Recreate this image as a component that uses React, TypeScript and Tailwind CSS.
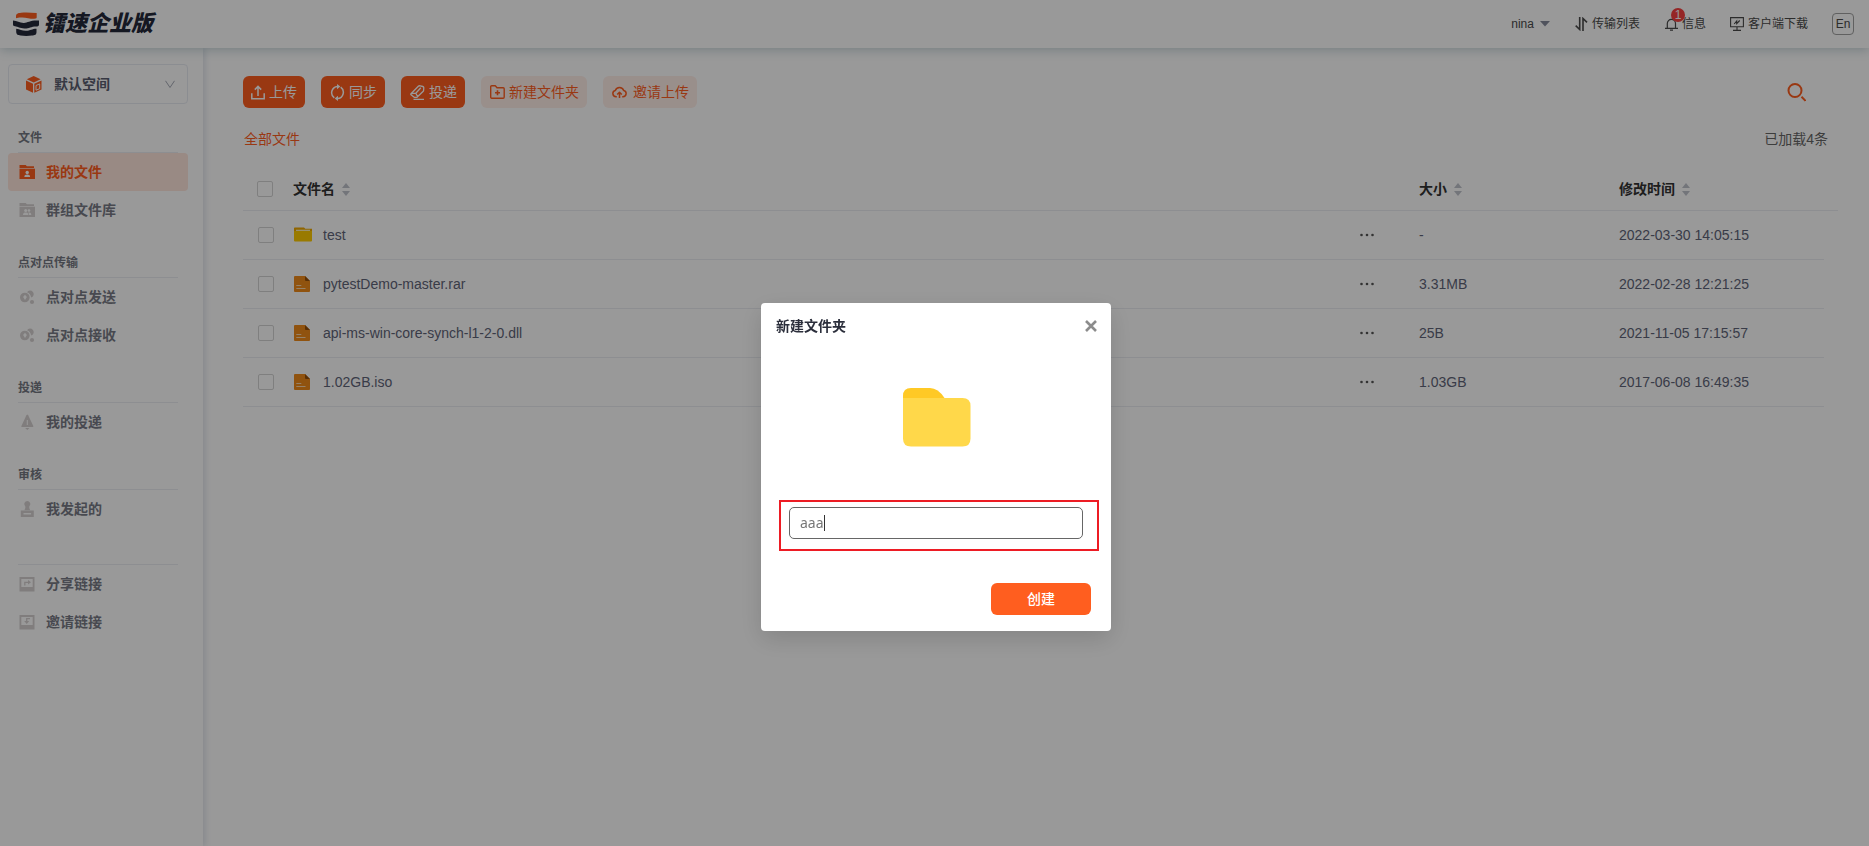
import React, { useState } from 'react';

interface IconProps {
  className?: string;
}

interface FileItem {
  name: string;
  size: string;
  time: string;
  folder?: boolean;
}

interface MenuItem {
  label: string;
  icon: React.FC<IconProps>;
  active?: boolean;
}

interface MenuGroup {
  title?: string;
  items: MenuItem[];
}

const LogoMark = () => (
  <svg width="26" height="24" viewBox="0 0 26 24">
    <path d="M3 6.300V4.500C3 1.500 5 1 8 .7c5-.6 10-.2 15.700 .3v4.600c0 .8-1 1.200-2.400 1.200-4.300.2-8.300-1.600-13.300-1.300-2 .1-4 .2-5 .8z" fill="#ff5e1f" />
    <path d="M0 8.500c4.500 0 6.500 2.600 11 2.400 4-.2 6-2.900 15-2.400v4c0 1.500-1 2-3 2-5 .1-7 2.100-11.500 2C6.500 16.400 5 14.500 2 14.300c-1.500-.1-2-.8-2-2z" fill="#24283a" />
    <path d="M3.200 16.800c4 .7 5.800 2.100 9.800 2 4.500-.1 6-1.900 10.500-2v3.200c0 3-1.800 3.300-4.500 3.600-3.500.4-8 .4-11.500 0-2.700-.3-4.300-1-4.300-4z" fill="#24283a" />
  </svg>
);

const FolderUserIcon: React.FC<IconProps> = ({ className }) => (
  <svg className={className} width="16" height="15" viewBox="0 0 16 15">
    <path d="M.5 0h6.200l1.200 1.300H15V3H.5z" fill="currentColor" />
    <path d="M.5 3.700H16V14H.500z" fill="currentColor" />
    <circle cx="8.200" cy="7.500" r="1.700" fill="#fff" />
    <path d="M5.300 12c0-2 1.300-2.600 2.900-2.600s2.900.6 2.900 2.600z" fill="#fff" />
  </svg>
);

const FolderGroupIcon: React.FC<IconProps> = ({ className }) => (
  <svg className={className} width="16" height="15" viewBox="0 0 16 15">
    <path d="M.5 0h6.200l1.200 1.300H15V3H.5z" fill="currentColor" />
    <path d="M.5 3.700H16V14H.500z" fill="currentColor" />
    <circle cx="6.700" cy="7.500" r="1.500" fill="#fff" />
    <circle cx="10" cy="7.500" r="1.300" fill="#fff" />
    <path d="M4 12c0-2 1.100-2.500 2.700-2.500S9.300 10 9.300 12zM9.900 12c0-1.200-.2-1.800-.6-2.400 1.900-.4 3 .4 3 2.400z" fill="#fff" />
  </svg>
);

const PeerIcon: React.FC<IconProps> = ({ className }) => (
  <svg className={className} width="16" height="15" viewBox="0 0 16 15">
    <path d="M8 2.300A3.600 3.600 0 1 1 12.200 7.600C11.800 5 10.500 3.200 8 2.300z" fill="currentColor" />
    <circle cx="5.800" cy="7.500" r="4.800" fill="currentColor" />
    <path d="M6 4.800l1.900 2.300-1.900 3-1.900-3z" fill="#fff" />
    <circle cx="13" cy="12" r="2.100" fill="currentColor" />
  </svg>
);

const DeliverIcon: React.FC<IconProps> = ({ className }) => (
  <svg className={className} width="16" height="16" viewBox="0 0 16 16">
    <path d="M8.300.500Q9.500.700 10 3L14.300 12q.4 1-.6 1H2.900q-1 0-.5-1L6.600 3Q7.200.700 8.300.500z" fill="currentColor" />
    <path d="M6.200 14h4.200l-2.100 2z" fill="currentColor" />
    <path d="M8.300 6v5" stroke="#fff" strokeWidth="1" />
  </svg>
);

const StampIcon: React.FC<IconProps> = ({ className }) => (
  <svg className={className} width="16" height="16" viewBox="0 0 16 16">
    <path d="M8.300 0a3 3 0 0 1 2.200 5c-.5.800-.3 2.500.7 4.300H5.400C6.400 7.500 6.600 5.800 6.100 5A3 3 0 0 1 8.300 0z" fill="currentColor" />
    <path d="M1.800 9.500h13V16h-13zM4.500 12v1.500h7.600V12z" fill="currentColor" fillRule="evenodd" />
  </svg>
);

const ShareIcon: React.FC<IconProps> = ({ className }) => (
  <svg className={className} width="16" height="15" viewBox="0 0 16 15">
    <path d="M.5 0H15.500V14.500H.500zM2.300 2v8h11.400V2z" fill="currentColor" fillRule="evenodd" />
    <path d="M5.800 8.500V5.300H10" stroke="currentColor" strokeWidth="1.300" fill="none" />
    <path d="M9 3l3 2.300L9 7.500z" fill="currentColor" />
  </svg>
);

const InviteIcon: React.FC<IconProps> = ({ className }) => (
  <svg className={className} width="16" height="15" viewBox="0 0 16 15">
    <path d="M.5 0H15.500V14.500H.500zM2.300 2v8h11.400V2z" fill="currentColor" fillRule="evenodd" />
    <path d="M11 3.700H7.700V7" stroke="currentColor" strokeWidth="1.300" fill="none" />
    <path d="M5.200 6h5L7.700 9z" fill="currentColor" />
  </svg>
);

const CubeIcon = () => (
  <svg width="16" height="17" viewBox="0 0 16 17">
    <path d="M7.700 0L14.600 3.200 7.700 6.400.8 3.200z" fill="#ff5e1f" />
    <path d="M0 4.500l7 3.200v9L0 13.500zM8.300 7.700l7.200-3.200v9l-7.200 3.200z" fill="#ff5e1f" />
    <path d="M10 9.500l3.700-1.600v4.800L10 14.200z" fill="none" stroke="#fff" strokeWidth="1" />
  </svg>
);

const UploadIcon = () => (
  <svg width="14" height="15" viewBox="0 0 14 15" fill="none" stroke="currentColor" strokeWidth="1.500">
    <path d="M.8 8.200v5.500h12.400V8.200M7 11V1.500M3.800 4.600L7 1.400l3.200 3.200" />
  </svg>
);

const SyncIcon = () => (
  <svg width="15" height="17" viewBox="0 0 15 17" fill="none" stroke="currentColor" strokeWidth="1.500">
    <path d="M4.300 13.800A6.300 6.300 0 0 1 7.500 2.400M10.700 3.200a6.300 6.300 0 0 1-3.200 11.400" />
    <path d="M7 0l3.300 2.600L7 5.200zM8 17l-3.300-2.600L8 11.800z" fill="currentColor" stroke="none" />
  </svg>
);

const SendIcon = () => (
  <svg width="15" height="15" viewBox="0 0 15 15" fill="none" stroke="currentColor" strokeWidth="1.300" strokeLinejoin="round">
    <path d="M1 8.700L8.300 1.300q.7-.7 2-.5l2.500.700q1 .3 1 1.300l-.2 2.400q0 .7-.6 1.300L7 12.300H4.200L1 9.700q-.4-.5 0-1zM1.200 8.700l4.600-.5 1.700 3M5.800 8.200l5-5.500M3.500 14.300H14" />
  </svg>
);

const NewFolderIcon = () => (
  <svg width="15" height="14" viewBox="0 0 15 14" fill="none" stroke="currentColor" strokeWidth="1.400" strokeLinejoin="round">
    <path d="M.7 12V1.700q0-1 1-1h3.600l1.700 2h6.200q1 0 1 1V12q0 1.200-1 1.200H1.700q-1 0-1-1.200z" />
    <path d="M7.500 5.300v5M5 7.800h5" strokeWidth="1.600" />
  </svg>
);

const CloudIcon = () => (
  <svg width="15" height="13" viewBox="0 0 15 13" fill="none" stroke="currentColor" strokeWidth="1.500" strokeLinejoin="round">
    <path d="M4.800 10.800H4A3.200 3.200 0 0 1 3.300 4.500 4.400 4.400 0 0 1 11.700 4.500 3.200 3.200 0 0 1 11 10.800H10.200" />
    <path d="M7.500 12V6.500M5.200 8.500l2.300-2.300 2.300 2.300" />
  </svg>
);

const TransferIcon = () => (
  <svg width="13" height="14" viewBox="0 0 13 14" fill="none" stroke="currentColor" strokeWidth="1.600">
    <path d="M4.700 0v12.500L.700 8.700M8 14V1.500l4 3.800" />
  </svg>
);

const BellIcon = () => (
  <svg width="13" height="13" viewBox="0 0 13 13" fill="none" stroke="currentColor" strokeWidth="1.200">
    <path d="M0 10.300h13M2.300 10V5.500a4.100 4.100 0 0 1 8.200 0V10M5 12.200h3" />
  </svg>
);

const MonitorIcon = () => (
  <svg width="14" height="14" viewBox="0 0 14 14" fill="none" stroke="currentColor" strokeWidth="1.100">
    <path d="M.6.600h12.800v9.200H.6zM7 9.800v3.500M3 13.400h8M4.200 7l2.500-3v2.700l3-3.200" />
  </svg>
);

const FolderIcon = () => (
  <svg width="18" height="15" viewBox="0 0 18 15">
    <path d="M0 1.200Q0 .5.7.500H10l1.300 1.300H18V6H0z" fill="#f0a800" />
    <path d="M2 2.700h14V6H2z" fill="#fff2b8" />
    <path d="M0 4h18v9.500q0 1-1 1H1q-1 0-1-1z" fill="#ffcc00" />
  </svg>
);

const FileIcon = () => (
  <svg width="16" height="16" viewBox="0 0 16 16">
    <path d="M1 0h10l5 5v10q0 1-1 1H1q-1 0-1-1V1q0-1 1-1z" fill="#f08a1a" />
    <path d="M11 0l5 5h-4q-1 0-1-1z" fill="#96500a" />
    <path d="M2.300 9.500h5M2.300 12.500h9.200" stroke="#fbd9ae" strokeWidth="1.200" />
  </svg>
);

const BigFolder = () => (
  <svg width="68" height="59" viewBox="0 0 68 59">
    <path d="M0 13V8Q0 0 8 0H27q8 0 14.500 10V13z" fill="#ffc925" />
    <path d="M0 10H59.500q8 0 8 8V50.500q0 8-8 8H8q-8 0-8-8z" fill="#ffd84a" />
  </svg>
);

const SortIcon = () => (
  <svg width="8" height="13" viewBox="0 0 8 13" fill="#c0c4cc">
    <path d="M4 0l4 5H0zM4 13L0 8h8z" />
  </svg>
);

const groups: MenuGroup[] = [
  {
    title: '文件',
    items: [
      { label: '我的文件', icon: FolderUserIcon, active: true },
      { label: '群组文件库', icon: FolderGroupIcon },
    ],
  },
  {
    title: '点对点传输',
    items: [
      { label: '点对点发送', icon: PeerIcon },
      { label: '点对点接收', icon: PeerIcon },
    ],
  },
  { title: '投递', items: [{ label: '我的投递', icon: DeliverIcon }] },
  { title: '审核', items: [{ label: '我发起的', icon: StampIcon }] },
  {
    items: [
      { label: '分享链接', icon: ShareIcon },
      { label: '邀请链接', icon: InviteIcon },
    ],
  },
];

const files: FileItem[] = [
  { name: 'test', size: '-', time: '2022-03-30 14:05:15', folder: true },
  { name: 'pytestDemo-master.rar', size: '3.31MB', time: '2022-02-28 12:21:25' },
  { name: 'api-ms-win-core-synch-l1-2-0.dll', size: '25B', time: '2021-11-05 17:15:57' },
  { name: '1.02GB.iso', size: '1.03GB', time: '2017-06-08 16:49:35' },
];

const Header = () => (
  <header className="relative z-10 flex h-12 items-center justify-between bg-white pl-[13px] pr-[15px] shadow-[0_2px_10px_rgba(60,110,125,0.3)]">
    <a href="#" className="flex items-center gap-1 text-[22px] leading-6 font-black italic text-[#24283a]">
      <LogoMark />
      镭速企业版
    </a>
    <nav className="flex items-center text-xs text-[#4a4a4a]">
      <button className="flex items-center gap-1.5">
        nina
        <svg width="10" height="6" viewBox="0 0 10 6" fill="#858b9c">
          <path d="M0 0h10L5 5.500z" />
        </svg>
      </button>
      <button className="ml-[25px] flex items-center gap-1">
        <TransferIcon />
        传输列表
      </button>
      <button className="relative ml-[25px] flex items-center gap-1">
        <BellIcon />
        信息
        <span className="absolute -top-2 left-1.5 h-3.5 w-3.5 rounded-full bg-[#f84040] text-center text-xs leading-3.5 text-white">1</span>
      </button>
      <button className="ml-6 flex items-center gap-1">
        <MonitorIcon />
        客户端下载
      </button>
      <button className="ml-6 h-[22px] w-[22px] rounded-sm border border-[#a0a0a0] text-center">En</button>
    </nav>
  </header>
);

const Sidebar = () => (
  <aside className="w-[203px] shrink-0 px-2 pt-4 pr-[15px] shadow-[2px_0_6px_rgba(90,110,150,0.2)]">
    <button className="flex h-10 w-full items-center rounded border border-[#e8ebf2] pr-3 pl-[17px] text-sm font-bold text-[#5a5e70]">
      <CubeIcon />
      <span className="ml-3">默认空间</span>
      <svg className="ml-auto" width="10" height="9" viewBox="0 0 10 9" fill="none" stroke="#a5a9b5">
        <path d="M.5.800L5 7.500 9.500.800" />
      </svg>
    </button>
    {groups.map((group, i) => (
      <section key={i}>
        {group.title ? (
          <h2 className="mx-2.5 border-b border-[#ebedf2] pt-6 pb-1 text-xs leading-5 font-bold text-[#757883]">{group.title}</h2>
        ) : (
          <div className="mx-2.5 h-[37px] border-b border-[#ebedf2]"></div>
        )}
        {group.items.map(({ label, icon: Icon, active }) => (
          <a
            key={label}
            href="#"
            className={`flex h-[38px] items-center gap-[11px] rounded pl-[11px] text-sm font-bold ${
              active ? 'bg-[#ffe6dc] text-[#ff5e1f]' : 'text-[#787b86]'
            }`}
          >
            <Icon className={active ? 'text-[#ff5e1f]' : 'text-[#d6d1d1]'} />
            {label}
          </a>
        ))}
      </section>
    ))}
  </aside>
);

const Toolbar = () => (
  <div className="flex items-center gap-4 text-sm">
    <button className="flex h-8 items-center gap-1 rounded-md bg-[#ff5e1f] px-2 text-white">
      <UploadIcon />
      上传
    </button>
    <button className="flex h-8 items-center gap-1 rounded-md bg-[#ff5e1f] px-2 pl-[9px] text-white">
      <SyncIcon />
      同步
    </button>
    <button className="flex h-8 items-center gap-1 rounded-md bg-[#ff5e1f] px-2 pl-[9px] text-white">
      <SendIcon />
      投递
    </button>
    <button className="flex h-8 items-center gap-1 rounded-md bg-[#ffeee8] px-2 pl-[9px] text-[#ff5e1f]">
      <NewFolderIcon />
      新建文件夹
    </button>
    <button className="flex h-8 items-center gap-1.5 rounded-md bg-[#ffeee8] px-2 pl-[9px] text-[#ff5e1f]">
      <CloudIcon />
      邀请上传
    </button>
    <button aria-label="搜索" className="mr-8 ml-auto text-[#ff5e1f]">
      <svg width="20" height="19" viewBox="0 0 20 19" fill="none" stroke="currentColor" strokeWidth="2">
        <circle cx="9" cy="7.500" r="6.500" />
        <path d="M15.500 13.800l4 4" />
      </svg>
    </button>
  </div>
);

const checkboxClass = 'block h-4 w-4 appearance-none rounded-xs border border-[#d4d4d4] bg-white';

const FileTable = () => (
  <table className="mt-[19px] w-full table-fixed text-left text-sm text-[#606478]">
    <thead>
      <tr className="h-[41px] border-b border-[#ebedf2] text-[#333]">
        <th className="w-[50px] pl-3.5">
          <input type="checkbox" aria-label="全选" className={checkboxClass} />
        </th>
        <th className="font-bold">
          <button className="flex items-center gap-[7px]">文件名<SortIcon /></button>
        </th>
        <th className="w-[59px]"></th>
        <th className="w-[200px] font-bold">
          <button className="flex items-center gap-[7px]">大小<SortIcon /></button>
        </th>
        <th className="w-[205px] font-bold">
          <button className="flex items-center gap-[7px]">修改时间<SortIcon /></button>
        </th>
        <th className="w-3.5"></th>
      </tr>
    </thead>
    <tbody>
      {files.map((file) => (
        <tr key={file.name} className="h-[49px] *:border-b *:border-[#ebedf2] *:last:border-b-0">
          <td className="pl-[15px]">
            <input type="checkbox" aria-label={file.name} className={checkboxClass} />
          </td>
          <td>
            <div className="flex items-center">
              <span className="flex w-[30px] pl-px">{file.folder ? <FolderIcon /> : <FileIcon />}</span>
              {file.name}
            </div>
          </td>
          <td>
            <button aria-label="更多" className="block text-[#555]">
              <svg width="14" height="4" viewBox="0 0 14 4" fill="currentColor">
                <circle cx="1.500" cy="2" r="1.300" />
                <circle cx="7" cy="2" r="1.300" />
                <circle cx="12.500" cy="2" r="1.300" />
              </svg>
            </button>
          </td>
          <td>{file.size}</td>
          <td>{file.time}</td>
          <td></td>
        </tr>
      ))}
    </tbody>
  </table>
);

const NewFolderDialog = () => {
  const [name, setName] = useState('aaa');

  return (
    <div className="fixed inset-0 z-20 flex items-center justify-center bg-black/40 pt-22 pl-[3px]">
      <div role="dialog" aria-labelledby="dialog-title" className="w-[350px] rounded bg-white pb-4 shadow-[0_8px_24px_rgba(0,0,0,0.14)]">
        <div className="flex h-[46px] items-center justify-between pr-3.5 pl-[15px]">
          <h1 id="dialog-title" className="text-sm font-bold text-[#2b2e3b]">新建文件夹</h1>
          <button aria-label="关闭">
            <svg width="12" height="12" viewBox="0 0 12 12" stroke="#8c8c8c" strokeWidth="2.600">
              <path d="M1 1l10 10M11 1L1 11" />
            </svg>
          </button>
        </div>
        <div className="flex justify-center pt-[39px] pl-px">
          <BigFolder />
        </div>
        {/* Name field */}
        <div className="mx-3 mt-[53px] ml-[18px] border-2 border-[#ed1c24] pt-[5px] pr-3.5 pb-2.5 pl-2">
          <label className="flex h-8 items-center rounded-[5px] border border-[#666] pl-2.5">
            <input
              type="text"
              aria-label="文件夹名称"
              value={name}
              onChange={(e) => setName(e.target.value)}
              className="field-sizing-content font-['Noto_Sans'] text-sm text-[#777] outline-none"
            />
            <span className="h-4 w-px bg-[#333]"></span>
          </label>
        </div>
        <div className="mt-8 flex justify-end pr-5">
          <button className="h-8 w-[100px] rounded-md bg-[#ff5e1f] text-sm font-medium text-white">创建</button>
        </div>
      </div>
    </div>
  );
};

export default function App() {
  return (
    <div className="flex min-h-screen flex-col bg-white font-['Liberation_Sans','Noto_Sans_CJK_SC',sans-serif]">
      <Header />
      <div className="flex grow">
        <Sidebar />
        <main className="min-w-0 grow pt-7 pr-[31px] pl-10">
          <Toolbar />
          <div className="mt-5 flex justify-between pr-2.5 pl-px text-sm leading-[22px]">
            <a href="#" className="text-[#ff5e1f]">全部文件</a>
            <span className="text-[#666]">已加载4条</span>
          </div>
          <FileTable />
        </main>
      </div>
      <NewFolderDialog />
    </div>
  );
}
